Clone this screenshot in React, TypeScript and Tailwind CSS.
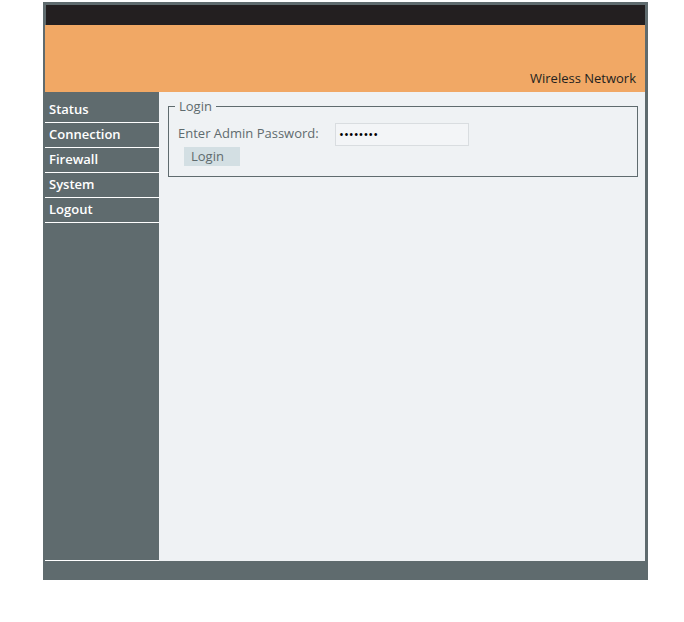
import React from "react";

export default function App() {
  const font = { fontFamily: '"Open Sans", "Noto Sans", sans-serif' };
  const items = ["Status", "Connection", "Firewall", "System", "Logout"];
  return (
    <div className="w-[684px] h-[622px] bg-white" style={font}>
      <div className="ml-[43px] pt-[2px]">
        <div className="w-[605px] bg-[#5f6b6e] pt-[3px] pl-[2px] pr-[3px] pb-[19px]">
          <div className="h-[20px] bg-[#231f20] ml-[1px]" />
          <div className="h-[67px] bg-[#f1a865] flex items-end justify-end pr-[9px] pb-[4px]">
            <span className="text-[13px] text-[#231f20]">Wireless Network</span>
          </div>
          <div className="flex h-[469px]">
            <div className="w-[114px] bg-[#5f6b6e] pt-[6px] flex flex-col border-b border-white">
              {items.map((it) => (
                <div
                  key={it}
                  className="h-[25px] border-b border-white pl-[4px] flex items-center text-[13px] font-semibold text-white"
                >
                  {it}
                </div>
              ))}
            </div>
            <div className="flex-1 bg-[#eff2f4] pl-[9px] pr-[7px] pt-[5px]">
              <fieldset className="border border-[#5f6b6e] pl-[9px] pb-[10px]">
                <legend className="ml-[-3px] px-[4px] text-[13px] text-[#5f6b6e]">Login</legend>
                <div className="flex items-center mt-[6px]">
                  <span className="w-[157px] text-[13px] text-[#5f6b6e]">Enter Admin Password:</span>
                  <input
                    type="password"
                    defaultValue="password"
                    className="w-[134px] h-[23px] border border-[#d9dde0] bg-[#f3f5f7] px-[3px] text-[13px] text-black outline-none"
                  />
                </div>
                <button className="block ml-[6px] mt-[1px] w-[56px] h-[19px] bg-[#d3dfe3] text-[13px] text-[#5f6b6e] text-left pl-[7px] leading-[17px]">
                  Login
                </button>
              </fieldset>
            </div>
          </div>
        </div>
      </div>
    </div>
  );
}
